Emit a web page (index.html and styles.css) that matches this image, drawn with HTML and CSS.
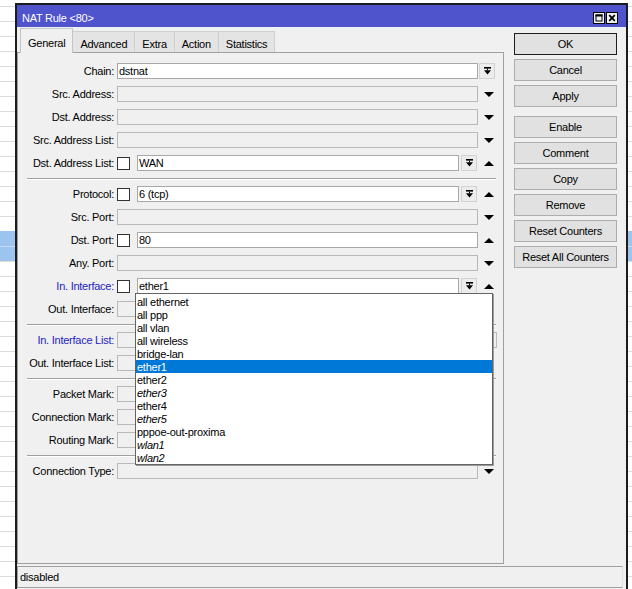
FILE: index.html
```html
<!DOCTYPE html>
<html>
<head>
<meta charset="utf-8">
<title>NAT Rule &lt;80&gt;</title>
<link rel="stylesheet" href="styles.css">
</head>
<body>
<svg class="defs" width="0" height="0">
  <symbol id="combo" viewBox="0 0 7 8"><rect x="0" y="0" width="7" height="1.6"/><rect x="3" y="1.6" width="1" height="1.6"/><polygon points="0,3.2 7,3.2 3.5,7.6"/></symbol>
  <symbol id="up" viewBox="0 0 10 5"><polygon points="0,5 10,5 5,0"/></symbol>
  <symbol id="down" viewBox="0 0 10 5"><polygon points="0,0 10,0 5,5"/></symbol>
</svg>
<div class="window">
  <div class="titlebar">
    <span class="title">NAT Rule &lt;80&gt;</span>
    <div class="wctl">
      <span class="wbtn"><svg viewBox="0 0 12 12" width="12" height="12"><rect x="0.5" y="0.5" width="11" height="11" fill="#f0f0f0" stroke="#000"/><rect x="3" y="3" width="6" height="6" fill="none" stroke="#000"/><rect x="2.5" y="2.5" width="7" height="2" fill="#000"/></svg></span>
      <span class="wbtn"><svg viewBox="0 0 12 12" width="12" height="12"><rect x="0.5" y="0.5" width="11" height="11" fill="#f0f0f0" stroke="#000"/><path d="M3.2 3.2 L8.8 8.8 M8.8 3.2 L3.2 8.8" stroke="#000" stroke-width="1.8"/></svg></span>
    </div>
  </div>
  <div class="body">
    <div class="main">
      <div class="tabpane">
        <div class="tabs">
          <div class="tab active">General</div>
          <div class="tab">Advanced</div>
          <div class="tab">Extra</div>
          <div class="tab">Action</div>
          <div class="tab">Statistics</div>
        </div>
        <div class="panel">
          <div class="row">
            <span class="lbl">Chain:</span>
            <div class="ctl"><div class="fld">dstnat</div></div>
            <div class="trail"><span class="cbtn"><svg class="ci"><use href="#combo"/></svg></span></div>
          </div>
          <div class="row">
            <span class="lbl">Src. Address:</span>
            <div class="ctl"><div class="fld dis"></div></div>
            <div class="trail"><svg class="arr"><use href="#down"/></svg></div>
          </div>
          <div class="row">
            <span class="lbl">Dst. Address:</span>
            <div class="ctl"><div class="fld dis"></div></div>
            <div class="trail"><svg class="arr"><use href="#down"/></svg></div>
          </div>
          <div class="row">
            <span class="lbl">Src. Address List:</span>
            <div class="ctl"><div class="fld dis"></div></div>
            <div class="trail"><svg class="arr"><use href="#down"/></svg></div>
          </div>
          <div class="row">
            <span class="lbl">Dst. Address List:</span>
            <div class="ctl"><span class="cb"></span><div class="fld">WAN</div><span class="cbtn inl"><svg class="ci"><use href="#combo"/></svg></span></div>
            <div class="trail"><svg class="arr"><use href="#up"/></svg></div>
          </div>
          <div class="sep"></div>
          <div class="row">
            <span class="lbl">Protocol:</span>
            <div class="ctl"><span class="cb"></span><div class="fld">6 (tcp)</div><span class="cbtn inl"><svg class="ci"><use href="#combo"/></svg></span></div>
            <div class="trail"><svg class="arr"><use href="#up"/></svg></div>
          </div>
          <div class="row">
            <span class="lbl">Src. Port:</span>
            <div class="ctl"><div class="fld dis"></div></div>
            <div class="trail"><svg class="arr"><use href="#down"/></svg></div>
          </div>
          <div class="row">
            <span class="lbl">Dst. Port:</span>
            <div class="ctl"><span class="cb"></span><div class="fld">80</div></div>
            <div class="trail"><svg class="arr"><use href="#up"/></svg></div>
          </div>
          <div class="row">
            <span class="lbl">Any. Port:</span>
            <div class="ctl"><div class="fld dis"></div></div>
            <div class="trail"><svg class="arr"><use href="#down"/></svg></div>
          </div>
          <div class="row">
            <span class="lbl blue">In. Interface:</span>
            <div class="ctl popup-host"><span class="cb"></span><div class="fld">ether1</div><span class="cbtn inl"><svg class="ci"><use href="#combo"/></svg></span>
              <ul class="dropdown">
                <li>all ethernet</li>
                <li>all ppp</li>
                <li>all vlan</li>
                <li>all wireless</li>
                <li>bridge-lan</li>
                <li class="sel">ether1</li>
                <li>ether2</li>
                <li class="it">ether3</li>
                <li>ether4</li>
                <li class="it">ether5</li>
                <li>pppoe-out-proxima</li>
                <li class="it">wlan1</li>
                <li class="it">wlan2</li>
              </ul>
            </div>
            <div class="trail"><svg class="arr"><use href="#up"/></svg></div>
          </div>
          <div class="row">
            <span class="lbl">Out. Interface:</span>
            <div class="ctl"><div class="fld dis"></div></div>
            <div class="trail"></div>
          </div>
          <div class="sep"></div>
          <div class="row">
            <span class="lbl blue">In. Interface List:</span>
            <div class="ctl wide"><div class="fld dis"></div></div>
          </div>
          <div class="row">
            <span class="lbl">Out. Interface List:</span>
            <div class="ctl"><div class="fld dis"></div></div>
            <div class="trail"></div>
          </div>
          <div class="sep"></div>
          <div class="row">
            <span class="lbl">Packet Mark:</span>
            <div class="ctl"><div class="fld dis"></div></div>
            <div class="trail"></div>
          </div>
          <div class="row">
            <span class="lbl">Connection Mark:</span>
            <div class="ctl"><div class="fld dis"></div></div>
            <div class="trail"></div>
          </div>
          <div class="row">
            <span class="lbl">Routing Mark:</span>
            <div class="ctl"><div class="fld dis"></div></div>
            <div class="trail"></div>
          </div>
          <div class="sep"></div>
          <div class="row">
            <span class="lbl">Connection Type:</span>
            <div class="ctl"><div class="fld dis"></div></div>
            <div class="trail"><svg class="arr"><use href="#down"/></svg></div>
          </div>
        </div>
      </div>
      <div class="buttons">
        <div class="btn default">OK</div>
        <div class="btn">Cancel</div>
        <div class="btn group-end">Apply</div>
        <div class="btn">Enable</div>
        <div class="btn">Comment</div>
        <div class="btn">Copy</div>
        <div class="btn">Remove</div>
        <div class="btn">Reset Counters</div>
        <div class="btn">Reset All Counters</div>
      </div>
    </div>
    <div class="status">disabled</div>
  </div>
</div>
</body>
</html>
```

FILE: styles.css
```css
* { box-sizing: border-box; }
html, body { margin: 0; padding: 0; }
body {
  width: 632px;
  height: 589px;
  overflow: hidden;
  font-family: "Liberation Sans", Arial, sans-serif;
  font-size: 11px;
  letter-spacing: -0.25px;
  color: #000;
  background-color: #fff;
  background-image:
    linear-gradient(to bottom, transparent 231px, #9dc3ef 231px, #9dc3ef 246px, #c6dbf5 246px, #c6dbf5 247px, #9dc3ef 247px, #9dc3ef 261px, transparent 261px),
    repeating-linear-gradient(to bottom, transparent 0, transparent 6px, #dcdcdc 6px, #dcdcdc 7px, transparent 7px, transparent 15px);
}
.defs { position: absolute; width: 0; height: 0; overflow: hidden; }

.window {
  margin: 3px 0 0 15px;
  width: 613px;
  height: 586px;
  border: 2px solid #1c1c1c;
  border-bottom: none;
  background: #f0f0f0;
  display: flex;
  flex-direction: column;
}
.titlebar {
  height: 22px;
  flex: none;
  background: #4f53cc;
  color: #fff;
  display: flex;
  align-items: flex-start;
  padding-left: 5px;
}
.title { line-height: 14px; margin-top: 6px; }
.wctl { margin-left: auto; margin-right: 8px; margin-top: 7px; display: flex; gap: 1px; }
.wbtn { display: block; width: 12px; height: 12px; }
.wbtn svg { display: block; }

.body { flex: 1; display: flex; flex-direction: column; }
.main { display: flex; height: 537px; flex: none; }
.tabpane { width: 487px; margin-top: 1px; display: flex; flex-direction: column; }
.tabs { height: 24px; display: flex; align-items: flex-end; padding-left: 3px; position: relative; z-index: 2; }
.tab {
  height: 21px;
  padding: 4px 7px 0;
  line-height: 17px;
  background: #e4e4e4;
  border: 1px solid #cfcfcf;
  border-bottom: none;
  border-left: none;
}
.tab.active {
  height: 25px;
  margin-bottom: -1px;
  padding-top: 6px;
  background: #f0f0f0;
  border-left: 1px solid #c4c4c4;
  border-color: #c4c4c4;
}
.panel {
  height: 512px;
  border: 1px solid #a0a0a0;
  padding-top: 10px;
  display: flex;
  flex-direction: column;
  gap: 7px;
}
.row { display: flex; align-items: center; height: 16px; }
.lbl { width: 96px; margin-right: 3px; text-align: right; line-height: 16px; white-space: nowrap; }
.lbl.blue { color: #2323c4; }
.ctl { width: 361px; height: 16px; display: flex; align-items: center; }
.ctl.wide { width: 380px; }
.popup-host { position: relative; }
.trail { width: 18px; margin-left: 1px; height: 16px; display: flex; align-items: center; }
.fld {
  flex: 1;
  height: 16px;
  border: 1px solid #a8a8a8;
  background: #fff;
  padding-left: 1px;
  line-height: 14px;
  white-space: nowrap;
}
.fld.dis { background: #f0f0f0; border-color: #b9b9b9; }
.cb { width: 13px; height: 13px; border: 1px solid #333; background: #fff; margin-right: 7px; flex: none; }
.cbtn {
  width: 16px;
  height: 16px;
  flex: none;
  background: #ececec;
  border: 1px solid #d2d2d2;
  display: flex;
  align-items: center;
  justify-content: center;
}
.cbtn.inl { margin-left: 2px; margin-right: 1px; }
.ci { width: 7px; height: 8px; fill: #000; }
.arr { width: 10px; height: 5px; fill: #000; margin-left: 5px; }
.sep { height: 1px; margin-left: 9px; width: 469px; background: #a0a0a0; box-shadow: 0 1px 0 #fff; flex: none; }

.dropdown {
  position: absolute;
  left: 18px;
  top: 15px;
  width: 358px;
  margin: 0;
  padding: 1px 0 0;
  list-style: none;
  background: #fff;
  border: 1px solid #646464;
  box-shadow: 1px 1px 0 #9a9a9a;
  z-index: 10;
}
.dropdown li { height: 13px; padding: 1px 0 0 1px; line-height: 12px; white-space: nowrap; }
.dropdown li.sel { background: #0078d7; color: #fff; }
.dropdown li.it { font-style: italic; }

.buttons { width: 103px; margin-left: 10px; margin-top: 6px; display: flex; flex-direction: column; gap: 4px; }
.btn {
  height: 22px;
  border: 1px solid #adadad;
  background: #e1e1e1;
  text-align: center;
  line-height: 20px;
}
.btn.default { border-color: #1e1e1e; }
.btn.group-end { margin-bottom: 5px; }

.status {
  margin-top: 2px;
  margin-right: 3px;
  height: 22px;
  border: 1px solid #a0a0a0;
  border-right-color: #e0e0e0;
  padding-left: 2px;
  line-height: 20px;
}
```
